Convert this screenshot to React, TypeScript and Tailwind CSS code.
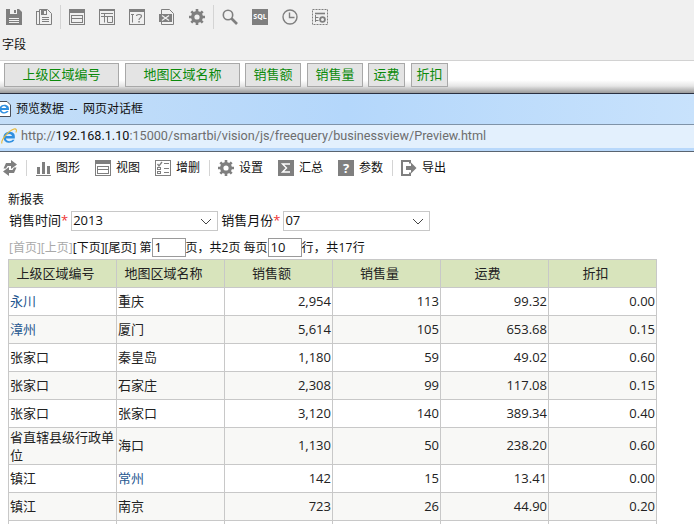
const font = { fontFamily: '"Open Sans", "Noto Sans CJK SC", sans-serif' };

const fieldButtons = [
  { label: '上级区域编号', width: 'w-[115px]' },
  { label: '地图区域名称', width: 'w-[115px] ml-[6px]' },
  { label: '销售额', width: 'w-[56px] ml-[5px]' },
  { label: '销售量', width: 'w-[56px] ml-[6px]' },
  { label: '运费', width: 'w-[37px] ml-[5px]' },
  { label: '折扣', width: 'w-[37px] ml-[6px]' },
];

const rows = [
  { up: '永川', upLink: true, map: '重庆', amount: '2,954', qty: '113', fee: '99.32', off: '0.00' },
  { up: '漳州', upLink: true, map: '厦门', amount: '5,614', qty: '105', fee: '653.68', off: '0.15' },
  { up: '张家口', map: '秦皇岛', amount: '1,180', qty: '59', fee: '49.02', off: '0.60' },
  { up: '张家口', map: '石家庄', amount: '2,308', qty: '99', fee: '117.08', off: '0.15' },
  { up: '张家口', map: '张家口', amount: '3,120', qty: '140', fee: '389.34', off: '0.40' },
  { up: '省直辖县级行政单位', map: '海口', amount: '1,130', qty: '50', fee: '238.20', off: '0.60' },
  { up: '镇江', map: '常州', mapLink: true, amount: '142', qty: '15', fee: '13.41', off: '0.00' },
  { up: '镇江', map: '南京', amount: '723', qty: '26', fee: '44.90', off: '0.20' },
  { up: '', map: '', amount: '', qty: '', fee: '', off: '' },
];

const gray = '#7f7f7f';

const Sep = ({ className = 'h-[26px]' }: { className?: string }) => (
  <span className={`w-px bg-[#d4d4d4] ${className}`} />
);

const Icon = ({ children }: { children: React.ReactNode }) => (
  <svg width={16} height={16} viewBox="0 0 16 16" className="shrink-0">
    {children}
  </svg>
);

const SaveIcon = ({ bg = '#f0f0f0' }: { bg?: string }) => (
  <Icon>
    <path d="M0 0h13l3 3v13H0z" fill={gray} />
    <rect x="4" y="0" width="7" height="5" fill={bg} />
    <rect x="8" y="1" width="2" height="3" fill={gray} />
    <path d="M3 9.500h10M3 11.500h10M3 13.500h10" stroke={bg} />
  </Icon>
);

const SaveAsIcon = () => (
  <Icon>
    <path d="M.5 2.500h3M.5 2v13.500h14V14" fill="none" stroke={gray} />
    <path d="M3.500.5h8l4 4v11h-12z" fill="#f0f0f0" stroke={gray} />
    <rect x="5" y="1" width="6" height="5" fill={gray} />
    <rect x="8" y="2" width="2" height="3" fill="#f0f0f0" />
    <path d="M6 8.500h7M6 10.500h7M6 12.500h7" stroke={gray} />
  </Icon>
);

const PanelIcon = ({ bg = 'none' }: { bg?: string }) => (
  <Icon>
    <rect x=".5" y=".5" width="15" height="15" fill={bg} stroke={gray} />
    <rect x="0" y="0" width="16" height="4" fill={gray} />
    <rect x="2.500" y="6.500" width="11" height="7" fill="none" stroke={gray} />
    <path d="M2.500 9.500h11" stroke={gray} />
  </Icon>
);

const GridIcon = () => (
  <Icon>
    <rect x=".5" y=".5" width="15" height="15" fill="none" stroke={gray} />
    <rect x="0" y="0" width="16" height="2" fill={gray} />
    <path d="M2 4.500h12M2 7.500h12M5.500 4.500v9M8.500 7.500v6h5v-6" fill="none" stroke={gray} />
  </Icon>
);

const HelpBoxIcon = () => (
  <Icon>
    <rect x=".5" y=".5" width="15" height="15" fill="none" stroke={gray} />
    <rect x="0" y="0" width="16" height="3" fill={gray} />
    <path d="M2 5.500h3M3.500 5.500v8" fill="none" stroke={gray} />
    <path d="M7.500 7c0-2 5-2 5 0 0 2-2.500 1.800-2.500 4" fill="none" stroke={gray} strokeWidth="1.200" />
    <rect x="9.300" y="12" width="1.500" height="1.500" fill={gray} />
  </Icon>
);

const ExcelIcon = () => (
  <Icon>
    <path d="M2.500.5h8l4 4v11h-12z" fill="none" stroke={gray} />
    <rect x="0" y="5" width="13" height="8" fill={gray} />
    <path d="M3 6.500l7 5M10 6.500l-7 5" stroke="#f0f0f0" strokeWidth="1.300" />
  </Icon>
);

const GearIcon = () => (
  <Icon>
    <circle cx="8" cy="8" r="4.300" fill="none" stroke={gray} strokeWidth="3.400" />
    <path d="M8 0v3M8 13v3M0 8h3M13 8h3M2.300 2.300l2.200 2.200M11.500 11.500l2.200 2.200M13.700 2.300l-2.200 2.200M4.500 11.500l-2.200 2.200" stroke={gray} strokeWidth="2.600" />
  </Icon>
);

const SearchIcon = () => (
  <Icon>
    <circle cx="6" cy="6" r="4.700" fill="none" stroke={gray} strokeWidth="1.600" />
    <path d="M9.500 9.500L15 15" stroke={gray} strokeWidth="2.600" />
  </Icon>
);

const ClockIcon = () => (
  <Icon>
    <circle cx="8" cy="8" r="7" fill="none" stroke={gray} strokeWidth="1.400" />
    <path d="M7.500 3.500v5h5" fill="none" stroke={gray} strokeWidth="1.400" />
  </Icon>
);

const TaskIcon = () => (
  <Icon>
    <rect x=".5" y=".5" width="15" height="15" fill="none" stroke={gray} strokeDasharray="2 1" />
    <path d="M3 4.500h10" stroke={gray} strokeWidth="1.600" />
    <path d="M3.500 6v7M3.500 8.500h3M3.500 11.500h3" stroke={gray} fill="none" />
    <circle cx="10.500" cy="10.500" r="2.400" fill="none" stroke={gray} strokeWidth="1.800" />
  </Icon>
);

const RefreshIcon = () => (
  <svg width={14} height={16} viewBox="0 0 14 16" className="shrink-0">
    <path d="M8 0l6 4.500L8 9V6H4.500L3 8.500H.5L3 3h5z" fill={gray} />
    <path d="M6 16L0 11.500 6 7v3h3.500L11 7.500h2.500L11 13H6z" fill={gray} />
  </svg>
);

const ChartIcon = () => (
  <svg width={15} height={15} viewBox="0 0 15 15" className="shrink-0">
    <path d="M1 6h3v7H1zM6 1h3v12H6zM11 5h3v8h-3z" fill={gray} />
    <path d="M0 14.500h15" stroke={gray} />
  </svg>
);

const CheckListIcon = () => (
  <Icon>
    <rect x=".5" y=".5" width="15" height="15" fill="none" stroke={gray} />
    <path d="M2.500 4l1.500 2 3-4" fill="none" stroke={gray} strokeWidth="1.300" />
    <path d="M9 3.500h5M9 8.500h5M9 12.500h5" stroke={gray} />
    <rect x="2.500" y="7.500" width="3" height="2" fill="none" stroke={gray} />
    <rect x="2.500" y="11.500" width="3" height="2" fill="none" stroke={gray} />
  </Icon>
);

const SigmaIcon = () => (
  <Icon>
    <rect width="16" height="16" fill={gray} />
    <path d="M12 4H4.500L8.500 8l-4 4H12" fill="none" stroke="#fff" strokeWidth="1.400" />
  </Icon>
);

const QuestionIcon = () => (
  <span className="flex h-[16px] w-[16px] items-center justify-center bg-[#7f7f7f] text-[13px] font-bold leading-none text-white">?</span>
);

const ExportIcon = () => (
  <Icon>
    <path d="M9 3.500V1H1v14h8v-2.500" fill="none" stroke={gray} strokeWidth="2" />
    <path d="M5 6h5V2.500L15.500 8 10 13.500V10H5z" fill={gray} />
  </Icon>
);

const IeIcon = () => (
  <svg width={16} height={17} viewBox="0 0 16 17" className="shrink-0">
    <path d="M13.800 10.500H5c.2 3 4.800 3.500 6.500 1.200h2c-1.600 4.300-10.500 4.500-11-2C2 3.500 10.500 2 13.300 6c.5 1.200.7 2.800.5 4.500zM5 8h6c-.3-2.800-5.500-2.800-6 0z" fill="#2f8fe0" />
    <path d="M1 15.500C-.5 12.500 7 3 13 1c2.500-.7 3 1.500 1.800 3.500" fill="none" stroke="#e8b93a" strokeWidth="1.100" />
  </svg>
);

// page icon in the dialog title, its left part runs off the window
const PageIcon = () => (
  <svg width={11} height={16} viewBox="0 0 11 16" className="shrink-0">
    <path d="M-1 .5h8l3.500 3.500v11.500H-1z" fill="#fff" stroke="#4a4f5a" />
    <path d="M9 9H1.500c.2 2.500 3.800 2.800 5.200 1h1.900c-1.300 3.400-8.600 3.600-9.100-1.600C-.9 3.500 6 2.300 8.400 5.500 8.900 6.500 9.100 7.700 9 9zM1.500 7H6.300C6 4.800 2 4.800 1.500 7z" fill="#2f8fe0" />
  </svg>
);

const Select = ({ value, width }: { value: string; width: string }) => (
  <div className={`flex h-[20px] items-center justify-between border border-[#c8c8c8] bg-white pl-[1px] pr-[5px] text-[13px] ${width}`}>
    <span>{value}</span>
    <svg width="12" height="7" viewBox="0 0 12 7">
      <path d="M1 1l5 5 5-5" fill="none" stroke="#444" />
    </svg>
  </div>
);

const ToolItem = ({ icon, label }: { icon: React.ReactNode; label: string }) => (
  <div className="flex items-center gap-[5px]">
    {icon}
    <span>{label}</span>
  </div>
);

export default function App() {
  return (
    <div className="h-[524px] w-[694px] overflow-hidden bg-white text-[12px] text-[#111]" style={font}>
      <div className="h-[60px] bg-[#f0f0f0]">
        <div className="flex h-[32px] items-center pl-[6px] pt-[1px]">
          <div className="flex items-center gap-[14px]">
            <SaveIcon />
            <SaveAsIcon />
          </div>
          <Sep className="ml-[8px] mr-[8px] h-[24px]" />
          <div className="flex items-center gap-[14px]">
            <PanelIcon />
            <GridIcon />
            <HelpBoxIcon />
            <ExcelIcon />
            <GearIcon />
          </div>
          <Sep className="ml-[8px] mr-[8px] h-[24px]" />
          <div className="flex items-center gap-[14px]">
            <SearchIcon />
            <span className="flex h-[16px] w-[16px] items-center justify-center bg-[#7f7f7f] text-[7px] font-bold leading-none text-white">SQL</span>
            <ClockIcon />
            <TaskIcon />
          </div>
        </div>
        <div className="pl-[2px] pt-[5px] leading-[16px]">字段</div>
      </div>
      <div className="h-[33px] border-t border-t-[#d2d2d2] bg-[linear-gradient(#fff_60%,#e6e6e6_78%,#9a9a9a)] pl-[4px] pt-[2px]">
        <div className="flex">
          {fieldButtons.map((b) => (
            <div key={b.label} className={`flex h-[24px] items-center justify-center border border-[#a8a8a8] bg-[#e4e4e4] text-[13px] text-[#0b8a0b] ${b.width}`}>
              {b.label}
            </div>
          ))}
        </div>
      </div>
      <div className="h-px bg-[#2a3040]" />
      <div className="flex h-[30px] items-center gap-[5px] bg-gradient-to-r from-[#c4def8] via-[#b4d7fb] to-[#c8e2fc] text-[12px]">
        <PageIcon />
        <span className="[word-spacing:2.500px]">预览数据 -- 网页对话框</span>
      </div>
      <div className="flex h-[24px] items-center gap-[4px] border-t border-t-[#7f93a8] bg-[#e3f0fd] pl-[1px] text-[12.650px] text-[#6d6d6d]" style={{ fontFamily: 'Roboto, sans-serif' }}>
        <IeIcon />
        <span>
          http://<span className="text-[#111]">192.168.1.10</span>:15000/smartbi/vision/js/freequery/businessview/Preview.html
        </span>
      </div>
      <div className="h-[3px] bg-[#b8d8fb]" />
      <div className="h-px bg-[#5a6470]" />
      <div className="flex h-[32px] items-center pl-[3px] text-[12px]">
        <RefreshIcon />
        <Sep className="ml-[9px] mr-[9px] h-[16px]" />
        <ToolItem icon={<ChartIcon />} label="图形" />
        <div className="ml-[15px] flex items-center gap-[15px]">
          <ToolItem icon={<PanelIcon />} label="视图" />
          <ToolItem icon={<CheckListIcon />} label="增删" />
        </div>
        <Sep className="ml-[9px] mr-[8px] h-[16px]" />
        <div className="flex items-center gap-[15px]">
          <ToolItem icon={<GearIcon />} label="设置" />
          <ToolItem icon={<SigmaIcon />} label="汇总" />
          <ToolItem icon={<QuestionIcon />} label="参数" />
        </div>
        <Sep className="ml-[9px] mr-[8px] h-[16px]" />
        <ToolItem icon={<ExportIcon />} label="导出" />
      </div>
      <div className="pl-[8px] pt-[7px] leading-[17px]">新报表</div>
      <div className="mt-[3px] flex h-[20px] items-center gap-[3px] pl-[9px] text-[13px]">
        <span>销售时间<span className="text-[#e33]">*</span></span>
        <Select value="2013" width="w-[147px]" />
        <span>销售月份<span className="text-[#e33]">*</span></span>
        <Select value="07" width="w-[147px]" />
      </div>
      <div className="mt-[7px] flex h-[19px] items-center pl-[9px] text-[12px]">
        <span className="text-[#a9a9a9]">[首页][上页]</span>
        <span>[下页][尾页] 第</span>
        <span className="flex h-[19px] w-[34px] items-center border border-[#9a9a9a] pl-[2px] text-[13px]">1</span>
        <span>页，共2页 每页</span>
        <span className="flex h-[19px] w-[34px] items-center border border-[#9a9a9a] pl-[2px] text-[13px]">10</span>
        <span className="tracking-[0.3px]">行，共17行</span>
      </div>
      <table className="ml-[8px] mt-[2px] w-[649px] table-fixed border-collapse text-[13px] text-[#222]">
        <colgroup>
          <col className="w-[108px]" />
          <col className="w-[108px]" />
          <col className="w-[108px]" />
          <col className="w-[108px]" />
          <col className="w-[108px]" />
          <col className="w-[108px]" />
        </colgroup>
        <thead>
          <tr className="h-[28px] bg-[#d8e4bc]">
            {['上级区域编号', '地图区域名称', '销售额', '销售量', '运费', '折扣'].map((h) => (
              <th key={h} className="border border-[#c8c8c8] pr-[14px] font-normal">{h}</th>
            ))}
          </tr>
        </thead>
        <tbody>
          {rows.map((r, i) => (
            <tr key={i} className={i % 2 === 1 ? 'bg-[#f8f8f6]' : 'bg-white'}>
              <td className={`border border-[#c8c8c8] px-[1px] ${i === 5 ? 'h-[36px] leading-[18px]' : 'h-[28px]'} ${r.upLink ? 'text-[#24568f]' : ''}`}>{r.up}</td>
              <td className={`border border-[#c8c8c8] px-[1px] ${r.mapLink ? 'text-[#24568f]' : ''}`}>{r.map}</td>
              <td className="border border-[#c8c8c8] px-[1px] text-right">{r.amount}</td>
              <td className="border border-[#c8c8c8] px-[1px] text-right">{r.qty}</td>
              <td className="border border-[#c8c8c8] px-[1px] text-right">{r.fee}</td>
              <td className="border border-[#c8c8c8] px-[1px] text-right">{r.off}</td>
            </tr>
          ))}
        </tbody>
      </table>
    </div>
  );
}
